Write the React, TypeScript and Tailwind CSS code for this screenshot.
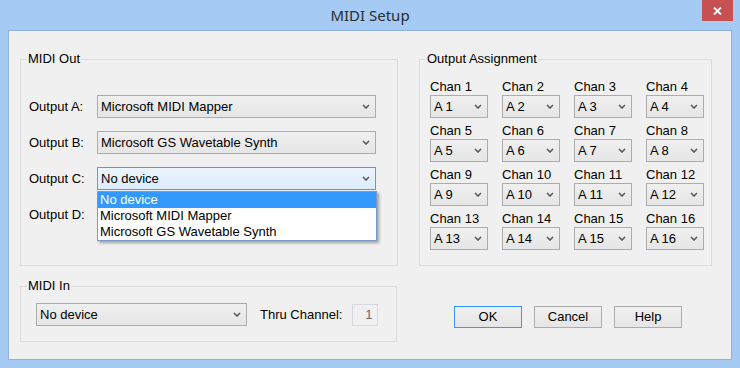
import clsx from "clsx";

const FONT = "font-['Liberation_Sans',Arial,sans-serif]";

function Chevron() {
  return (
    <svg width="8" height="5" viewBox="0 0 8 5" className="shrink-0">
      <path d="M1 1 L4 4 L7 1" fill="none" stroke="#5a5a5a" strokeWidth="1.6" />
    </svg>
  );
}

function Combo({ value, className, focused }: { value: string; className: string; focused?: boolean }) {
  return (
    <div
      className={clsx(
        "flex h-[23px] items-center justify-between border pl-[3px] pr-[5px] text-[13px] text-black",
        focused
          ? "border-[#569de5] bg-linear-to-b from-[#ecf4fc] to-[#dcecfc]"
          : "border-[#acacac] bg-linear-to-b from-[#f0f0f0] to-[#e5e5e5]",
        className
      )}
    >
      <span className="whitespace-nowrap leading-[16px]">{value}</span>
      <Chevron />
    </div>
  );
}

function GroupBox({ title, className, children }: { title: string; className: string; children: React.ReactNode }) {
  return (
    <div className={clsx("relative border border-[#dcdcdc]", className)}>
      <span className="absolute -top-[9px] left-[6px] bg-[#f0f0f0] px-[1px] text-[13px] leading-[16px] text-black">
        {title}
      </span>
      {children}
    </div>
  );
}

const outputs = ["A", "B", "C", "D"];
// Output D sits under the open list, so its value is never seen
const outputValues: Record<string, string> = {
  A: "Microsoft MIDI Mapper",
  B: "Microsoft GS Wavetable Synth",
  C: "No device",
  D: "",
};
const dropItems = ["No device", "Microsoft MIDI Mapper", "Microsoft GS Wavetable Synth"];
const channels = Array.from({ length: 16 }, (_, i) => i + 1);

export default function App() {
  return (
    <div className={clsx("flex h-[368px] w-[740px] flex-col bg-[#a5cbf5]", FONT)}>
      {/* Title bar */}
      <div className="relative flex h-[30px] shrink-0 items-center justify-center">
        <span className="font-['Noto_Sans',sans-serif] text-[15px] leading-[20px] text-[#2b2b2b]">MIDI Setup</span>
        <div className="absolute right-[7px] top-0 flex h-[21px] w-[31px] items-center justify-center bg-[#c75050]">
          <svg width="9" height="8" viewBox="0 0 9 8">
            <path d="M1 0.5 L8 7.5 M8 0.5 L1 7.5" stroke="#fff" strokeWidth="1.8" />
          </svg>
        </div>
      </div>

      {/* Client area */}
      <div className="mx-[8px] flex h-[330px] w-[724px] flex-col border border-[#8fb3de] bg-[#f0f0f0] pl-[11px] pt-[28px]">
        <div className="flex gap-[21px]">
          <GroupBox title="MIDI Out" className="h-[207px] w-[378px]">
            <div className="flex flex-col gap-[13px] pl-[8px] pt-[35px]">
              {outputs.map((o) => (
                <div key={o} className="flex items-center">
                  <span className="w-[68px] text-[13px] leading-[16px] text-black">Output {o}:</span>
                  <div className="relative">
                    <Combo value={outputValues[o]} className="w-[279px]" focused={o === "C"} />
                    {o === "C" && (
                      <div className="absolute left-0 top-[24px] z-10 w-[280px] border border-[#7a9cc6] bg-white shadow-[2px_2px_3px_rgba(0,0,0,0.35)]">
                        {dropItems.map((d, i) => (
                          <div
                            key={d}
                            className={clsx(
                              "h-[16px] whitespace-nowrap pl-[2px] text-[13px] leading-[16px]",
                              i === 0 ? "bg-[#3399ff] text-white" : "text-black"
                            )}
                          >
                            {d}
                          </div>
                        ))}
                      </div>
                    )}
                  </div>
                </div>
              ))}
            </div>
          </GroupBox>

          <GroupBox title="Output Assignment" className="h-[207px] w-[293px]">
            <div className="grid grid-cols-[58px_58px_58px_58px] gap-x-[14px] gap-y-[5px] pl-[10px] pt-[19px]">
              {channels.map((c) => (
                <div key={c} className="flex flex-col">
                  <span className="text-[13px] leading-[16px] text-black">Chan {c}</span>
                  <Combo value={`A ${c}`} className="w-[58px]" />
                </div>
              ))}
            </div>
          </GroupBox>
        </div>

        <div className="mt-[20px] flex items-start">
          <GroupBox title="MIDI In" className="h-[56px] w-[377px]">
            <div className="flex items-center pl-[15px] pt-[16px]">
              <Combo value="No device" className="w-[211px]" />
              <span className="ml-[13px] text-[13px] leading-[16px] text-black">Thru Channel:</span>
              <div className="ml-[10px] flex h-[22px] w-[26px] items-center justify-end border border-[#d9d9d9] pr-[5px] text-[13px] text-[#6d6d6d]">
                1
              </div>
            </div>
          </GroupBox>

          <div className="ml-[57px] mt-[20px] flex gap-[12px]">
            {["OK", "Cancel", "Help"].map((b) => (
              <div
                key={b}
                className={clsx(
                  "flex h-[22px] w-[68px] items-center justify-center border bg-linear-to-b from-[#f0f0f0] to-[#e5e5e5] text-[13px] text-black",
                  b === "OK" ? "border-[#3399ff]" : "border-[#adadad]"
                )}
              >
                {b}
              </div>
            ))}
          </div>
        </div>
      </div>
    </div>
  );
}
